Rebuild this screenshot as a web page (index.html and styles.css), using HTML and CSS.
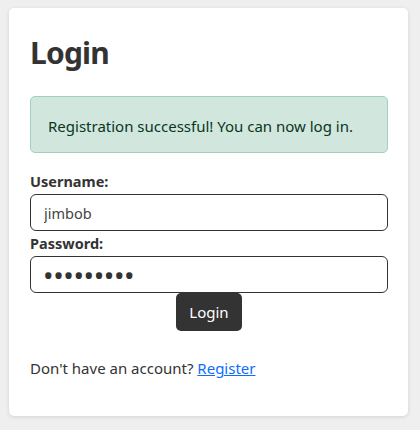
FILE: index.html
```html
<!DOCTYPE html>
<html>
<head>
<meta charset="utf-8">
<link rel="stylesheet" href="styles.css">
</head>
<body>
<div class="card">
  <h1 class="title">Login</h1>
  <div class="alert">Registration successful! You can now log in.</div>
  <form class="form">
    <label class="label" for="u">Username:</label>
    <input class="input" id="u" type="text" value="jimbob">
    <label class="label" for="p">Password:</label>
    <input class="input pass" id="p" type="password" value="123456789">
    <button class="btn" type="button">Login</button>
  </form>
  <p class="foot">Don't have an account? <a href="#" class="link">Register</a></p>
</div>
</body>
</html>
```
FILE: styles.css
```css
html, body { margin: 0; padding: 0; }
body {
  background: #efefef;
  font-family: "Noto Sans", sans-serif;
  color: #333;
  padding: 8px 0 0 9px;
  height: 430px;
  box-sizing: border-box;
}
.card {
  width: 399px;
  height: 408px;
  box-sizing: border-box;
  background: #fff;
  border-radius: 5px;
  box-shadow: 0 1px 4px rgba(0,0,0,0.12);
  padding: 20px 20px 20px 21px;
}
.title {
  margin: 5px 0 23px;
  font-size: 30px;
  letter-spacing: -0.8px;
  font-weight: 700;
  line-height: 40px;
}
.alert {
  background: #d1e7dd;
  border: 1px solid #a3cfbb;
  border-radius: 5px;
  color: #0a3622;
  padding: 18px 17px 14px;
  font-size: 15px;
  line-height: 23px;
  margin-bottom: 16px;
}
.form { display: flex; flex-direction: column; }
.label { font-weight: 700; font-size: 14.5px; line-height: 25px; }
.input {
  height: 37px;
  box-sizing: border-box;
  border: 1px solid #333;
  border-radius: 6px;
  padding: 0 13px;
  font-family: "Noto Sans", sans-serif;
  font-size: 14.5px;
  color: #444;
  margin: 0;
  outline: none;
}
.pass { font-size: 28px; color: #333; padding-left: 12px; letter-spacing: -0.4px; }
.btn {
  align-self: center;
  background: #333;
  color: #fff;
  border: none;
  border-radius: 5px;
  font-family: "Noto Sans", sans-serif;
  font-size: 15px;
  padding: 0 13px;
  height: 38px;
  margin: 0;
}
.foot { margin: 26px 0 0; font-size: 15px; line-height: 22px; }
.link { color: #0d6efd; }
```
